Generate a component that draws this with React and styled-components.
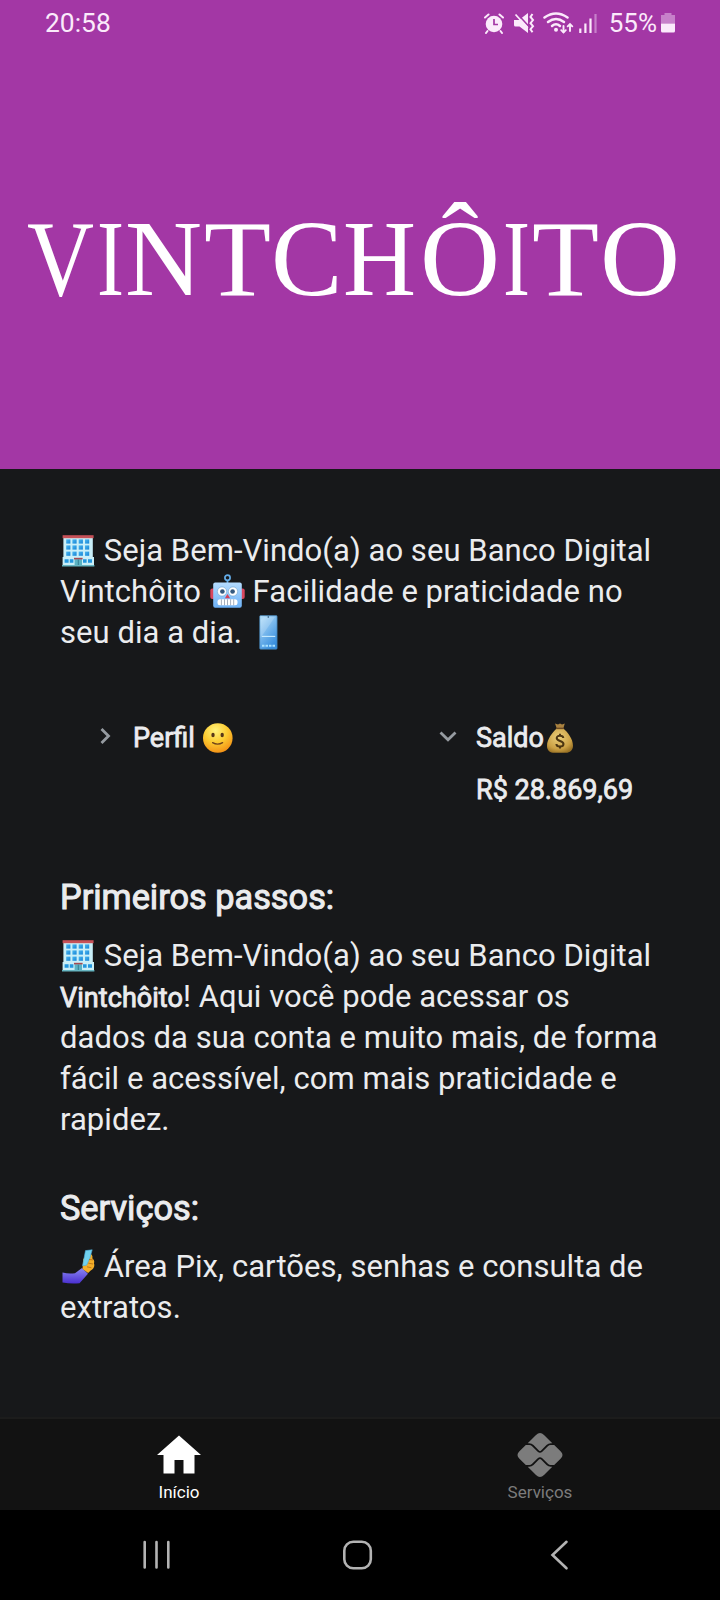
import React from "react";
import styled, { createGlobalStyle } from "styled-components";

const GlobalStyle = createGlobalStyle`
  * { box-sizing: border-box; }
  body { margin: 0; background: #000; }
  h1, h2, p { margin: 0; font-weight: 400; }
`;

const Screen = styled.div`
  width: 720px;
  height: 1600px;
  display: flex;
  flex-direction: column;
  overflow: hidden;
  background: #17181a;
  color: #ebecee;
  font-family: Roboto, "Liberation Sans", sans-serif;
`;

const Hero = styled.header`
  flex: 0 0 469px;
  display: flex;
  flex-direction: column;
  background: #a337a5;
`;

const StatusBar = styled.div`
  height: 46px;
  padding: 0 45px 0 45px;
  display: flex;
  align-items: center;
  justify-content: space-between;
  color: #fbeafb;
  font-size: 26px;
  line-height: 46px;
`;

const Clock = styled.span`
  font-size: 26.4px;
`;

const StatusIcons = styled.div`
  display: flex;
  align-items: center;
`;

const StatusIcon = styled.svg`
  display: block;
  flex: none;
  margin-right: ${(p) => p.$gap || 0}px;
`;

const Wordmark = styled.h1`
  display: flex;
  margin-top: 153px;
  padding-left: 27px;
  color: #fff;
  font-family: "Liberation Serif", serif;
  font-size: 108px;
  line-height: 120px;
`;

const LetterSlot = styled.span`
  flex: none;
  width: ${(p) => p.$width}px;
  margin-right: ${(p) => p.$gap}px;
`;

const Letter = styled.span`
  display: inline-block;
  transform: scaleX(${(p) => p.$stretch});
  transform-origin: left;
`;

const Content = styled.main`
  flex: 0 0 948px;
  padding: 61px 40px 0 60px;
`;

const Paragraph = styled.p`
  font-size: 31px;
  line-height: 41px;
  letter-spacing: 0.05px;
  white-space: nowrap;
`;

const Strong = styled.span`
  font-size: 27px;
  line-height: 0;
  -webkit-text-stroke: 0.9px currentColor;
`;

const Section = styled.section`
  margin-top: ${(p) => p.$top}px;
`;

const Heading = styled.h2`
  margin-bottom: 16px;
  font-size: 34.3px;
  line-height: 44px;
  -webkit-text-stroke: 1px currentColor;
`;

const Cards = styled.div`
  margin-top: 67px;
  height: 88px;
  display: grid;
  grid-template-columns: 343px 1fr;
`;

const Card = styled.div`
  display: flex;
  gap: 16px;
  padding-left: 33px;
`;

const Chevron = styled.svg`
  flex: none;
  margin-top: 4px;
  fill: none;
  stroke: #969ba1;
  stroke-width: 2.8;
`;

const CardText = styled.div`
  display: flex;
  flex-direction: column;
  gap: 16px;
  font-size: 27px;
  line-height: 36px;
  white-space: nowrap;
  -webkit-text-stroke: 0.8px currentColor;
`;

const Glyph = styled.svg`
  display: inline-block;
  width: ${(p) => (p.$small ? 32 : 36)}px;
  height: ${(p) => (p.$small ? 32 : 36)}px;
  vertical-align: -7px;
`;

const TabBar = styled.nav`
  flex: 0 0 93px;
  display: grid;
  grid-template-columns: 1fr 1fr;
  background: #121212;
  border-top: 2px solid #1c1c1c;
`;

const Tab = styled.div`
  display: flex;
  flex-direction: column;
  align-items: center;
  padding-top: 13px;
  padding-right: ${(p) => (p.$active ? 2 : 0)}px;
  color: ${(p) => (p.$active ? "#fff" : "#7c7c7c")};
  font-size: 17px;
  line-height: 20px;
  svg { display: block; margin-bottom: 4px; }
`;

const SystemBar = styled.footer`
  flex: 1;
  display: grid;
  grid-template-columns: 200px 209px 1fr;
  align-items: center;
  padding-left: 141px;
  background: #000;
  svg { display: block; fill: none; stroke: #b3b3b3; stroke-width: 2.6; stroke-linecap: round; }
`;

const Building = () => (
  <Glyph viewBox="0 0 36 36" aria-hidden="true">
    <defs>
      <linearGradient id="pane" x1="0" y1="0" x2="1" y2="1">
        <stop offset="0" stopColor="#4bb7f0" />
        <stop offset="1" stopColor="#1684d6" />
      </linearGradient>
    </defs>
    <rect x="3.4" y="4.5" width="29.4" height="23" fill="#c9eff8" />
    <rect x="2.6" y="3.2" width="31" height="3" fill="#c65158" />
    <rect x="2.6" y="25" width="31.4" height="8.4" fill="#c9eff8" />
    {[7.4, 13.4, 19.6].map((y) =>
      [6.2, 12.4, 18.7, 25].map((x) => (
        <rect key={`${x}-${y}`} x={x} y={y} width="4.2" height="4.2" fill="url(#pane)" />
      ))
    )}
    <path d="M4.6 27.200h4v3.600h-4zM9.800 27.200h3.600v3.600H9.800zM23 27.200h3.600v3.600H23zM28 27.200h4v3.600h-4z" fill="#2397de" />
    <rect x="14.6" y="27.2" width="7.4" height="6" fill="#5bb3c4" />
    <rect x="14" y="25.8" width="8.6" height="1.6" fill="#a54a52" />
    <path d="M18.300 27.600v6" stroke="#357f93" />
    <rect x="2" y="33" width="32.4" height="1.5" fill="#67b6c2" />
  </Glyph>
);

const Robot = () => (
  <Glyph viewBox="0 0 36 36" aria-hidden="true">
    <defs>
      <linearGradient id="metal" x1="0" y1="0" x2="0" y2="1">
        <stop offset="0" stopColor="#b5dcff" />
        <stop offset="1" stopColor="#6db1f6" />
      </linearGradient>
    </defs>
    <rect x="1.3" y="15.5" width="5" height="10.5" rx="2" fill="#d9475f" />
    <rect x="30.7" y="15.5" width="5" height="10.5" rx="2" fill="#d9475f" />
    <path d="M18.500 7v4" stroke="#5aa5e4" strokeWidth="1.8" />
    <circle cx="18.5" cy="4.8" r="2.6" fill="none" stroke="#63ace8" strokeWidth="1.7" />
    <rect x="4.2" y="9.6" width="28.6" height="25.2" rx="2" fill="url(#metal)" />
    <circle cx="13" cy="18.5" r="4.6" fill="#fff" stroke="#72a5cc" strokeWidth=".6" />
    <circle cx="24" cy="18.5" r="4.6" fill="#fff" stroke="#72a5cc" strokeWidth=".6" />
    <circle cx="13.4" cy="18.5" r="2.3" fill="#35597f" />
    <circle cx="23.6" cy="18.5" r="2.3" fill="#35597f" />
    <path d="M18.500 21l2.600 4.300h-5.200z" fill="#d84057" />
    <rect x="8.5" y="26.3" width="20" height="6" rx="2.5" fill="#fff" />
    <path d="M12.400 26.300v6M15.500 26.300v6M18.500 26.300v6M21.600 26.300v6M24.700 26.300v6" stroke="#8e99ab" strokeWidth=".8" />
  </Glyph>
);

const Phone = () => (
  <Glyph viewBox="0 0 36 36" aria-hidden="true">
    <defs>
      <linearGradient id="screen" x1="0" y1="0" x2="0.6" y2="1">
        <stop offset="0" stopColor="#b9e2fc" />
        <stop offset="1" stopColor="#398fde" />
      </linearGradient>
    </defs>
    <rect x="9.7" y="1.6" width="17.4" height="33.6" rx="1" fill="url(#screen)" stroke="#3c79a9" strokeWidth=".7" />
    <path d="M25 3L10.500 24V6L14 3z" fill="#fff" opacity=".18" />
    <circle cx="18.3" cy="3" r=".8" fill="#244b6b" />
    <path d="M11.800 22.400h13.400" stroke="#c9edff" strokeWidth="1.1" />
    <path d="M12 31.800h13" stroke="#a9e1ff" strokeWidth="2" strokeDasharray="2.5 1" />
  </Glyph>
);

const Smile = () => (
  <Glyph $small viewBox="0 0 32 32" aria-hidden="true">
    <defs>
      <radialGradient id="face" cx=".42" cy=".25" r=".8">
        <stop offset="0" stopColor="#fff27c" />
        <stop offset=".5" stopColor="#fccb31" />
        <stop offset="1" stopColor="#f28b13" />
      </radialGradient>
    </defs>
    <circle cx="15.8" cy="16" r="14.8" fill="url(#face)" />
    <ellipse cx="11" cy="13" rx="1.7" ry="2.2" fill="#583719" />
    <ellipse cx="20.2" cy="13" rx="1.7" ry="2.2" fill="#583719" />
    <path d="M10.600 20.600q5 3 10 0" fill="none" stroke="#70441a" strokeWidth="1.3" strokeLinecap="round" />
  </Glyph>
);

const MoneyBag = () => (
  <Glyph $small viewBox="0 0 32 32" aria-hidden="true">
    <defs>
      <radialGradient id="bag" cx=".45" cy=".35" r=".7">
        <stop offset="0" stopColor="#ecd07c" />
        <stop offset=".7" stopColor="#cba044" />
        <stop offset="1" stopColor="#987023" />
      </radialGradient>
    </defs>
    <path d="M11 1.400l3 1 2-.8 2 .8 2.800-1-1.500 5.200h-6.500z" fill="#aa8240" />
    <path d="M12.300 6.800h7.400c3.800 3.400 9.300 10 9.300 17 0 4.800-3.400 7-7 7H10.300c-4 0-7.300-2-7.300-6.800 0-7 5.700-13.600 9.300-17.200z" fill="url(#bag)" />
    <path d="M12 6.400h7.900" stroke="#6d4b24" strokeWidth="1.5" />
    <g fill="none" stroke="#4c3512" strokeWidth="2">
      <path d="M19.300 16c-.2-3-6.600-3.200-6.600.1 0 3.700 6.800 2.200 6.800 5.900 0 3.400-7 3.400-7.100 0" />
      <path d="M16 11.800v2.200M16 24.200v2.400" />
    </g>
  </Glyph>
);

const Selfie = () => (
  <Glyph viewBox="0 0 36 36" aria-hidden="true">
    <defs>
      <linearGradient id="sleeve" x1="0" y1="0" x2="0" y2="1">
        <stop offset="0" stopColor="#8b88f3" />
        <stop offset="1" stopColor="#4a2fd0" />
      </linearGradient>
    </defs>
    <path d="M2.500 24.600q6.500 1.600 12.500.6l7-5.200 6 5.800-8.500 9.400q-8.500 1-17-.8z" fill="url(#sleeve)" />
    <path d="M22.600 19.500l.6-8.500 6.800-5.600c2.200 1 2.800 3 2.300 4.800 2 1.700 2.300 3.600 1.600 5 1.200 2.800-.2 6-3.200 7.300l-2.600 2.500-5.500-4z" fill="#f4ae28" />
    <path d="M25.500 2.600l6.700-.8-2.200 8-3.400 7.400-4 .6z" fill="#70d2ef" stroke="#49a9d9" strokeWidth=".6" />
    <path d="M29 11.500l4 .4M28.400 15.200l4.600.8M27 18.800l4.400 1" stroke="#b97316" strokeWidth=".9" />
  </Glyph>
);

// [letter, natural advance in em, drawn width, space after]
const letters = [
  ["V", 0.722, 67, 2.5],
  ["I", 0.333, 27, 1.5],
  ["N", 0.722, 77, 1.5],
  ["T", 0.611, 67, 0.7],
  ["C", 0.667, 71.5, 0.8],
  ["H", 0.722, 73, 3.5],
  ["Ô", 0.722, 80, 3.5],
  ["I", 0.333, 27, 1.2],
  ["T", 0.611, 67, 1.3],
  ["O", 0.722, 80, 0],
];

export default function App() {
  return (
    <Screen>
      <GlobalStyle />
      <Hero>
        <StatusBar>
          <Clock>20:58</Clock>
          <StatusIcons>
            <StatusIcon $gap={10} width="20" height="21" viewBox="0 0 20 21">
              <circle cx="10" cy="11" r="8.3" fill="currentColor" />
              <path d="M1 4.500L4.500 1.500M19 4.500l-3.500-3M3.500 18l-1.500 2M16.500 18l1.500 2" stroke="currentColor" strokeWidth="2" strokeLinecap="round" />
              <path d="M10 6v5.500h4" fill="none" stroke="#a337a5" strokeWidth="1.7" />
            </StatusIcon>
            <StatusIcon $gap={8} width="21" height="21" viewBox="0 0 21 21">
              <path d="M0 7h5L14 0v20l-8.500-6.500H1.500Q0 13.500 0 12z" fill="currentColor" />
              <path d="M3 .5L15 13.500" stroke="#a337a5" strokeWidth="1.6" />
              <path d="M1.500 1.500L13.800 15" stroke="currentColor" strokeWidth="1.8" />
              <path d="M18.500 1l-2 3 2.500 3-2.500 3.200 2.500 3-2.500 3 2 3" fill="none" stroke="currentColor" strokeWidth="2" />
            </StatusIcon>
            <StatusIcon $gap={5} width="31" height="22" viewBox="0 0 31 22">
              <g fill="none" stroke="currentColor" strokeWidth="2.5" strokeLinecap="round">
                <path d="M1.500 5.500q11.500-8 23 0" />
                <path d="M5 10q8-6 16 0" />
                <path d="M9 14q4-3.500 8 0" />
                <path d="M20.500 14v6M27 19v-6" strokeWidth="1.9" />
                <path d="M18.200 18.200l2.300 2.300 2.300-2.300M24.700 14.300l2.300-2.300 2.300 2.300" strokeWidth="1.9" />
              </g>
              <circle cx="13" cy="17.8" r="2" fill="currentColor" />
            </StatusIcon>
            <StatusIcon $gap={12} width="18" height="20" viewBox="0 0 18 20">
              <path d="M1.300 15.500V20M6.400 10.500V20M11.500 5.500V20" stroke="currentColor" strokeWidth="2.2" />
              <path d="M16.500 1V20" stroke="#c780ca" strokeWidth="2.2" />
            </StatusIcon>
            <span>55%</span>
            <StatusIcon width="18" height="20" viewBox="-4 0 18 20">
              <path d="M3.500 0h7v2H14v8.500H0V2h3.500z" fill="#c780ca" />
              <path d="M0 10.500h14V18q0 1.500-1.500 1.500h-11Q0 19.500 0 18z" fill="currentColor" />
            </StatusIcon>
          </StatusIcons>
        </StatusBar>
        <Wordmark>
          {letters.map(([ch, em, width, gap], i) => (
            <LetterSlot key={i} $width={width} $gap={gap}>
              <Letter $stretch={width / (em * 108)}>{ch}</Letter>
            </LetterSlot>
          ))}
        </Wordmark>
      </Hero>

      <Content>
        <Paragraph>
          <Building /> Seja Bem-Vindo(a) ao seu Banco Digital<br />
          Vintchôito <Robot /> Facilidade e praticidade no<br />
          seu dia a dia. <Phone />
        </Paragraph>

        <Cards>
          <Card>
            <Chevron width="24" height="24" viewBox="0 0 24 24"><path d="M8.500 5l7 7-7 7" /></Chevron>
            <CardText><div>Perfil <Smile /></div></CardText>
          </Card>
          <Card>
            <Chevron width="24" height="24" viewBox="0 0 24 24"><path d="M4.500 8.500l7.500 7.200 7.500-7.200" /></Chevron>
            <CardText><div>Saldo<MoneyBag /></div><div>R$ 28.869,69</div></CardText>
          </Card>
        </Cards>

        <Section $top={67}>
          <Heading>Primeiros passos:</Heading>
          <Paragraph>
            <Building /> Seja Bem-Vindo(a) ao seu Banco Digital<br />
            <Strong>Vintchôito</Strong>! Aqui você pode acessar os<br />
            dados da sua conta e muito mais, de forma<br />
            fácil e acessível, com mais praticidade e<br />
            rapidez.
          </Paragraph>
        </Section>

        <Section $top={46}>
          <Heading>Serviços:</Heading>
          <Paragraph>
            <Selfie /> Área Pix, cartões, senhas e consulta de<br />
            extratos.
          </Paragraph>
        </Section>
      </Content>

      <TabBar>
        <Tab $active>
          <svg width="46" height="46" viewBox="0 0 46 46" fill="currentColor">
            <path d="M23 3.500L45 23h-6.500v18.500h-11V28h-9v13.500h-11V23H1z" />
          </svg>
          Início
        </Tab>
        <Tab>
          <svg width="46" height="46" viewBox="0 0 46 46" fill="currentColor">
            <path d="M10.700 11.200L19 3q4-4 8 0l8.300 8.200h-1.500q-2.500 0-4.300 1.800l-5.400 5.400q-1.100 1.100-2.200 0L16.500 13q-1.800-1.800-4.300-1.800z" />
            <path d="M10.700 34.800L19 43q4 4 8 0l8.300-8.200h-1.500q-2.500 0-4.300-1.800l-5.400-5.400q-1.100-1.100-2.200 0L16.500 33q-1.800 1.800-4.300 1.800z" />
            <path d="M8.800 13h3.500q1.600 0 2.800 1.200l5.600 5.500q2.300 2 4.600 0l5.600-5.500q1.200-1.200 2.800-1.200h3.500L43.800 19.500q3.400 3.500 0 7L37.200 33h-3.500q-1.600 0-2.800-1.200l-5.600-5.500q-2.300-2-4.600 0l-5.600 5.500Q13.900 33 12.300 33H8.800L2.200 26.500q-3.400-3.500 0-7z" />
          </svg>
          Serviços
        </Tab>
      </TabBar>

      <SystemBar>
        <svg width="32" height="32" viewBox="0 0 32 32"><path d="M3.700 3v25.500M15.500 3v25.500M27.300 3v25.500" /></svg>
        <svg width="32" height="32" viewBox="0 0 32 32"><rect x="3.300" y="2.800" width="26.500" height="26.500" rx="9" /></svg>
        <svg width="20" height="32" viewBox="0 0 20 32"><path d="M16.500 2.800L2.500 16l14 13.300" /></svg>
      </SystemBar>
    </Screen>
  );
}
